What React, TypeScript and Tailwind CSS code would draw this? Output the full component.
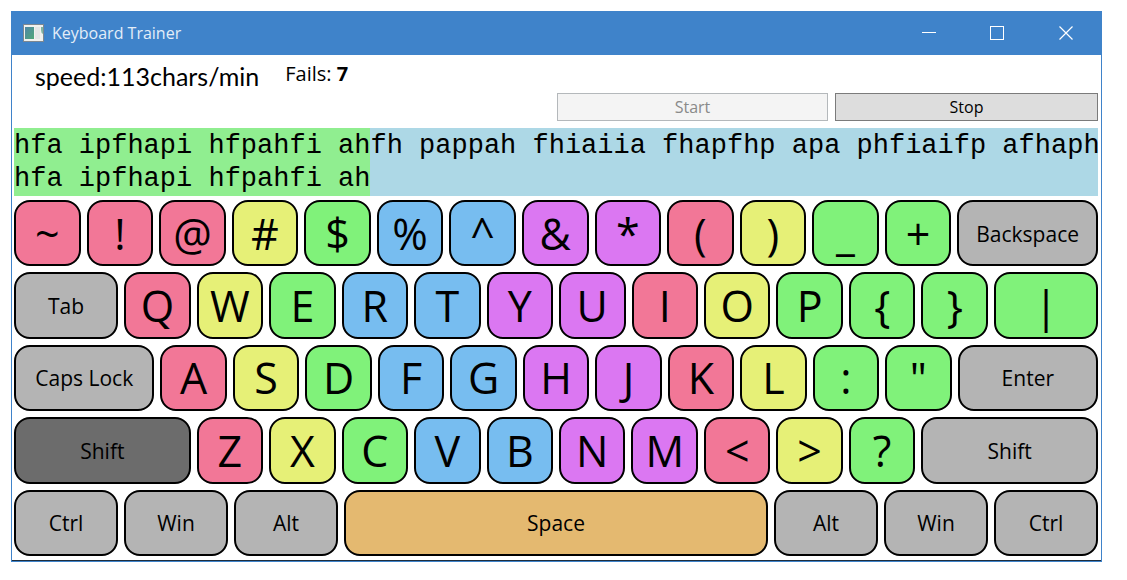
import React from "react";

type Tone = "pink" | "yellow" | "green" | "blue" | "purple" | "gray" | "dark" | "tan";
type Size = "unit" | "tab" | "caps" | "shift" | "space";

interface KeyDef {
  label: string;
  tone: Tone;
  size?: Size;
}

const tones: Record<Tone, string> = {
  pink: "bg-[#f27797]",
  yellow: "bg-[#e6f077]",
  green: "bg-[#80f27a]",
  blue: "bg-[#77bdf0]",
  purple: "bg-[#db77f2]",
  gray: "bg-[#b4b4b4]",
  dark: "bg-[#6c6c6c]",
  tan: "bg-[#e4b970]",
};

// Growth shares, net of the 2px border on each side of a key.
const sizes: Record<Size, string> = {
  unit: "grow-[624]",
  tab: "grow-[1000]",
  caps: "grow-[1363]",
  shift: "grow-[1725]",
  space: "grow-[4200]",
};

const k = (label: string, tone: Tone, size?: Size): KeyDef => ({ label, tone, size });

const rows: KeyDef[][] = [
  [
    k("~", "pink"), k("!", "pink"), k("@", "pink"), k("#", "yellow"), k("$", "green"),
    k("%", "blue"), k("^", "blue"), k("&", "purple"), k("*", "purple"), k("(", "pink"),
    k(")", "yellow"), k("_", "green"), k("+", "green"), k("Backspace", "gray", "caps"),
  ],
  [
    k("Tab", "gray", "tab"), k("Q", "pink"), k("W", "yellow"), k("E", "green"), k("R", "blue"),
    k("T", "blue"), k("Y", "purple"), k("U", "purple"), k("I", "pink"), k("O", "yellow"),
    k("P", "green"), k("{", "green"), k("}", "green"), k("|", "green", "tab"),
  ],
  [
    k("Caps Lock", "gray", "caps"), k("A", "pink"), k("S", "yellow"), k("D", "green"),
    k("F", "blue"), k("G", "blue"), k("H", "purple"), k("J", "purple"), k("K", "pink"),
    k("L", "yellow"), k(":", "green"), k('"', "green"), k("Enter", "gray", "caps"),
  ],
  [
    k("Shift", "dark", "shift"), k("Z", "pink"), k("X", "yellow"), k("C", "green"),
    k("V", "blue"), k("B", "blue"), k("N", "purple"), k("M", "purple"), k("<", "pink"),
    k(">", "yellow"), k("?", "green"), k("Shift", "gray", "shift"),
  ],
  [
    k("Ctrl", "gray", "tab"), k("Win", "gray", "tab"), k("Alt", "gray", "tab"),
    k("Space", "tan", "space"),
    k("Alt", "gray", "tab"), k("Win", "gray", "tab"), k("Ctrl", "gray", "tab"),
  ],
];

function Key({ label, tone, size = "unit" }: KeyDef) {
  const text = label.length === 1 ? "text-[43px]" : "pt-[2px] text-[21px]";
  return (
    <button
      type="button"
      className={`flex min-w-0 basis-0 items-center justify-center whitespace-nowrap rounded-2xl border-2 border-black leading-none text-black ${sizes[size]} ${tones[tone]} ${text}`}
    >
      {label}
    </button>
  );
}

function TitleBar() {
  return (
    <header className="flex h-11 shrink-0 items-center bg-[#3f83ca] pl-[11px] text-white">
      <svg width="21" height="18" viewBox="0 0 21 18" aria-hidden="true">
        <defs>
          <linearGradient id="pane" x1="0" y1="0" x2="1" y2="1">
            <stop offset="0" stopColor="#4f86a8" />
            <stop offset="1" stopColor="#4fa878" />
          </linearGradient>
        </defs>
        <rect x="0" y="0" width="21" height="18" fill="#7d8790" />
        <rect x="1" y="1" width="19" height="16" fill="#f1f1ee" />
        <rect x="2" y="3" width="9" height="12" fill="url(#pane)" />
        <rect x="12" y="3" width="5" height="12" fill="#e4e6e6" />
        <path d="M18 3h2v7q-2-1-2-4z" fill="#7fb5a2" />
      </svg>
      <h1 className="ml-2 grow text-base text-[#e3edf8]">Keyboard Trainer</h1>
      <button type="button" aria-label="Minimize" className="flex h-full w-[68px] items-center justify-center">
        <svg width="14" height="14" viewBox="0 0 14 14"><path d="M0 6.5H14" stroke="white" /></svg>
      </button>
      <button type="button" aria-label="Maximize" className="flex h-full w-[68px] items-center justify-center">
        <svg width="14" height="14" viewBox="0 0 14 14"><rect x=".5" y=".5" width="13" height="13" fill="none" stroke="white" /></svg>
      </button>
      <button type="button" aria-label="Close" className="flex h-full w-[70px] items-center justify-center">
        <svg width="14" height="14" viewBox="0 0 14 14"><path d="M.5 .5l13 13M13.5 .5l-13 13" stroke="white" strokeWidth="1.2" /></svg>
      </button>
    </header>
  );
}

export default function App() {
  return (
    <div className="flex min-h-screen flex-col bg-white pt-[11px] pr-[25px] pb-[18px] pl-[11px] font-['Open_Sans','Noto_Sans',sans-serif] text-black">
      <div className="flex grow flex-col border border-t-0 border-[#3f83ca]">
        <TitleBar />
        <main className="flex grow flex-col border-b border-[#1d2d3d] pt-1 pr-[3px] pb-1 pl-[2px]">
          <div className="flex h-[34px] items-start pl-[21px]">
            <p className="font-[Lato,sans-serif] text-[25px] leading-[34px]">speed:113chars/min</p>
            <p className="ml-[26px] text-xl leading-[30px]">
              Fails: <strong>7</strong>
            </p>
          </div>
          <div className="flex justify-end gap-[7px]">
            <button
              type="button"
              disabled
              className="h-7 w-1/4 border border-[#b4b8bb] bg-[#f4f4f4] text-base leading-none text-[#8a8a8a]"
            >
              Start
            </button>
            <button
              type="button"
              className="h-7 w-[263px] border border-[#7b7b7b] bg-[#dddddd] text-base leading-none"
            >
              Stop
            </button>
          </div>
          <div className="mt-[7px] flex whitespace-pre bg-[#add8e6] font-['Liberation_Mono',monospace] text-[27px] leading-[33px]">
            <div className="shrink-0 bg-[#90ee90] pt-[2px]">
              <p>hfa ipfhapi hfpahfi ah</p>
              <p>hfa ipfhapi hfpahfi ah</p>
            </div>
            <p className="shrink-0 pt-[2px]">fh pappah fhiaiia fhapfhp apa phfiaifp afhaph</p>
          </div>
          <div className="mt-1 grid grow auto-rows-fr gap-[6px]">
            {rows.map((row, i) => (
              <div key={i} className="flex gap-[6px]">
                {row.map((key, j) => (
                  <Key key={j} {...key} />
                ))}
              </div>
            ))}
          </div>
        </main>
      </div>
    </div>
  );
}
